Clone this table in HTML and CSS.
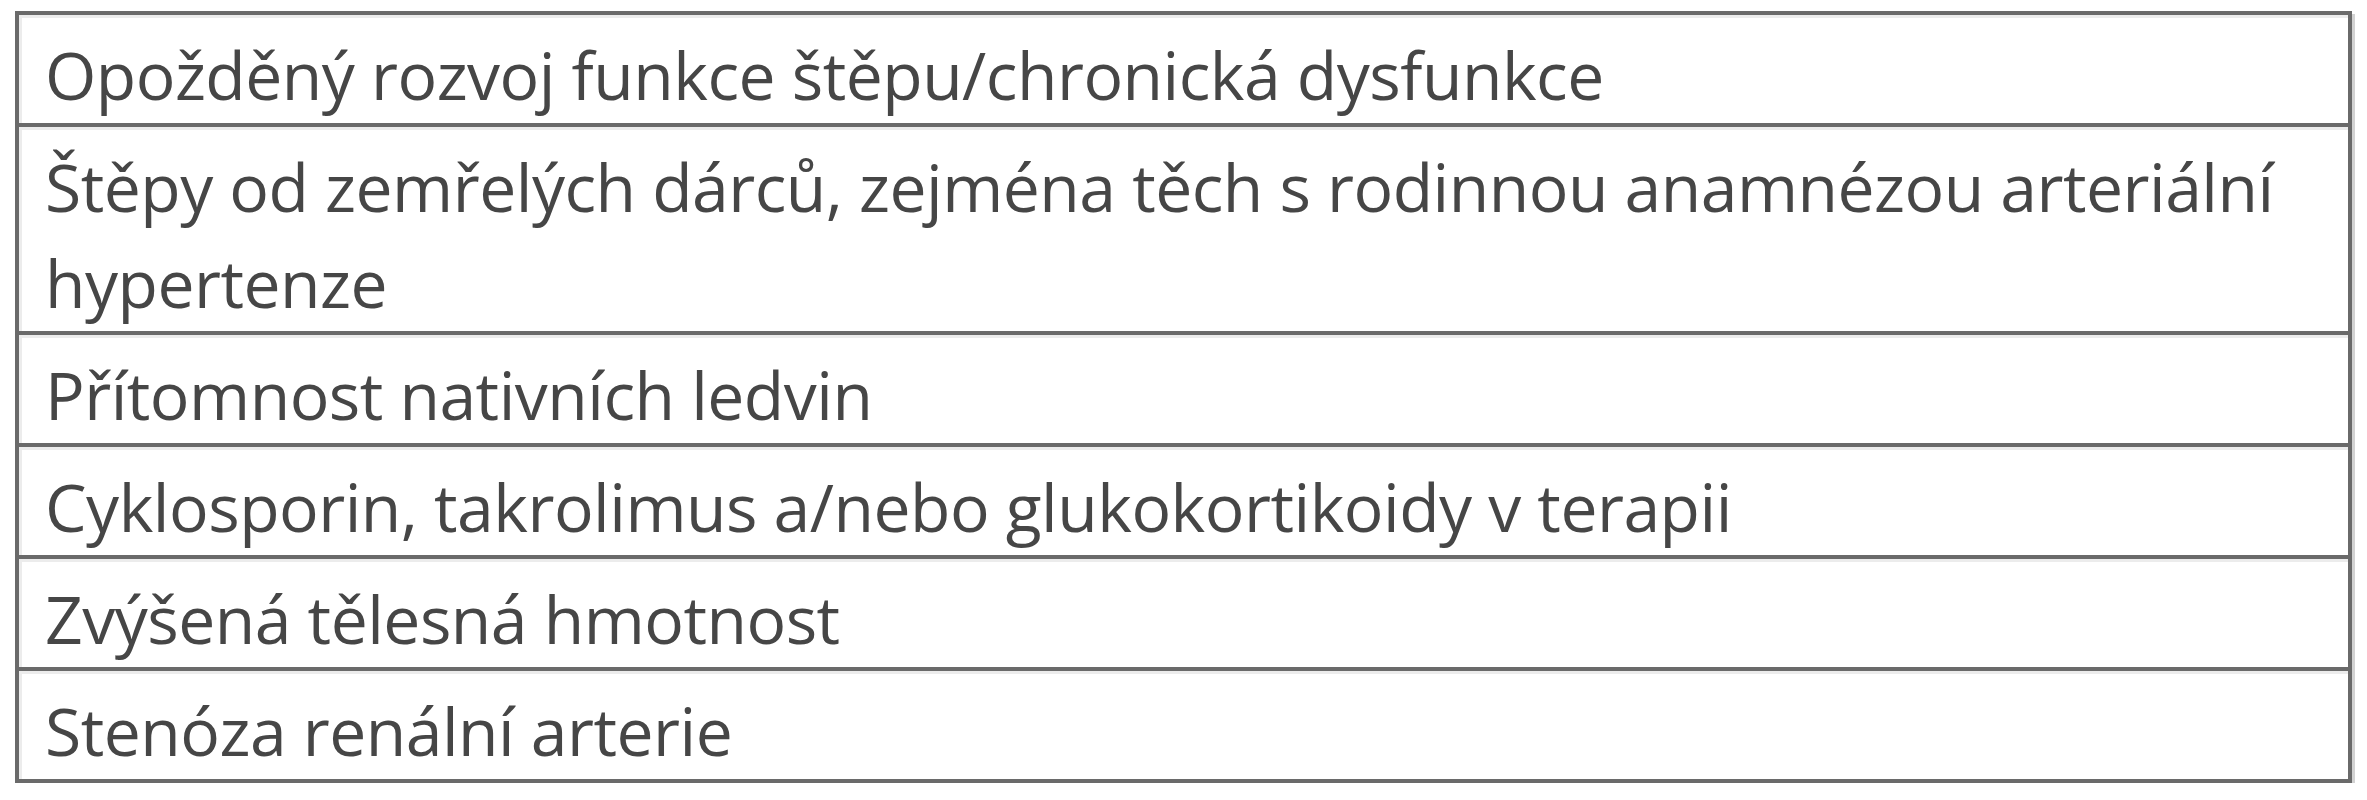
FILE: index.html
```html
<!DOCTYPE html>
<html lang="cs">
<head>
<meta charset="utf-8">
<title>Tabulka</title>
<link rel="stylesheet" href="styles.css">
</head>
<body>
<div class="table">
  <div class="row">Opožděný rozvoj funkce štěpu/chronická dysfunkce</div>
  <div class="row">Štěpy od zemřelých dárců, zejména těch s rodinnou anamnézou arteriální<br>hypertenze</div>
  <div class="row">Přítomnost nativních ledvin</div>
  <div class="row">Cyklosporin, takrolimus a/nebo glukokortikoidy v terapii</div>
  <div class="row">Zvýšená tělesná hmotnost</div>
  <div class="row">Stenóza renální arterie</div>
</div>
</body>
</html>
```
FILE: styles.css
```css
html, body {
  margin: 0;
  padding: 0;
  background: #ffffff;
}
body {
  padding: 11px 0 0 15px;
}
.table {
  width: 2337px;
  box-sizing: border-box;
  border: 4px solid #6a6a6a;
  border-bottom: none;
  box-shadow: 3px 3px 0 #d2d2d2;
  display: flex;
  flex-direction: column;
}
.row {
  border-bottom: 4px solid #6a6a6a;
  padding: 11px 20px 1px 26px;
  font-family: "Open Sans", "Liberation Sans", sans-serif;
  font-size: 66px;
  letter-spacing: -0.5px;
  line-height: 96px;
  color: #464646;
  white-space: nowrap;
  box-shadow: inset 3px 3px 0 #ececec;
}
```
